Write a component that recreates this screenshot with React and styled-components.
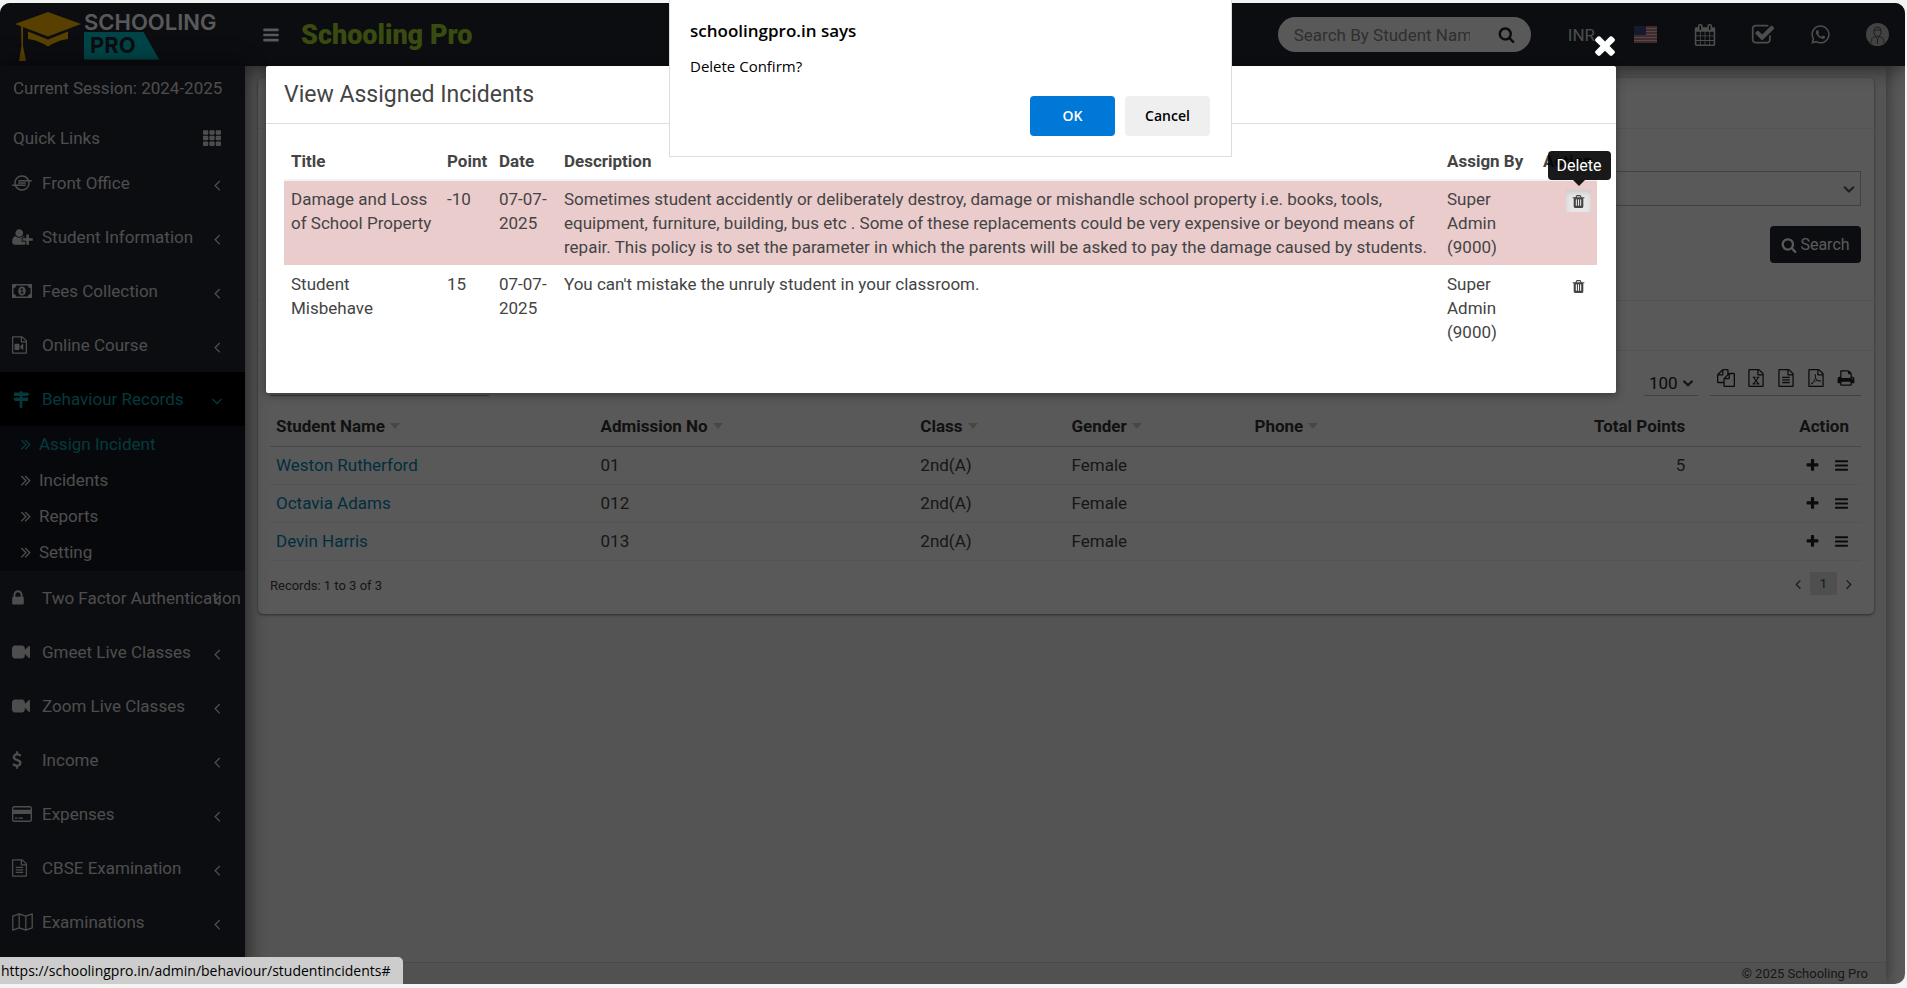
import React from "react";
import styled, { createGlobalStyle } from "styled-components";
import { FaIoxhost, FaTh, FaWhatsapp } from "react-icons/fa";

const FILE =
  "M1596 380q28 28 48 76t20 88v1152q0 40-28 68t-68 28h-1344q-40 0-68-28t-28-68v-1600q0-40 28-68t68-28h896q40 0 88 20t76 48zm-444-244v376h376q-10-29-22-41l-313-313q-12-12-41-22zm384 1528v-1024h-416q-40 0-68-28t-28-68v-416h-768v1536h1280z";

const PATHS = {
  bars: "M1664 1344v128q0 26-19 45t-45 19h-1408q-26 0-45-19t-19-45v-128q0-26 19-45t45-19h1408q26 0 45 19t19 45zm0-512v128q0 26-19 45t-45 19h-1408q-26 0-45-19t-19-45v-128q0-26 19-45t45-19h1408q26 0 45 19t19 45zm0-512v128q0 26-19 45t-45 19h-1408q-26 0-45-19t-19-45v-128q0-26 19-45t45-19h1408q26 0 45 19t19 45z",
  plus: "M1600 736v192q0 40-28 68t-68 28h-416v416q0 40-28 68t-68 28h-192q-40 0-68-28t-28-68v-416h-416q-40 0-68-28t-28-68v-192q0-40 28-68t68-28h416v-416q0-40 28-68t68-28h192q40 0 68 28t28 68v416h416q40 0 68 28t28 68z",
  search:
    "M1216 832q0-185-131.500-316.500t-316.500-131.500-316.500 131.500-131.500 316.500 131.500 316.500 316.500 131.500 316.500-131.500 131.500-316.500zm512 832q0 52-38 90t-90 38q-54 0-90-38l-343-342q-179 124-399 124-143 0-273.500-55.500t-225-150-150-225-55.500-273.500 55.500-273.500 150-225 225-150 273.500-55.500 273.500 55.500 225 150 150 225 55.500 273.500q0 220-124 399l343 343q37 37 37 90z",
  calendar:
    "M192 1664h288v-288h-288v288zm352 0h320v-288h-320v288zm-352-352h288v-320h-288v320zm352 0h320v-320h-320v320zm-352-384h288v-288h-288v288zm736 736h320v-288h-320v288zm-384-736h320v-288h-320v288zm768 736h288v-288h-288v288zm-384-352h320v-320h-320v320zm-352-864v-288q0-13-9.500-22.500t-22.500-9.500h-64q-13 0-22.500 9.500t-9.500 22.500v288q0 13 9.500 22.500t22.500 9.500h64q13 0 22.500-9.500t9.500-22.500zm736 864h288v-320h-288v320zm-384-384h320v-288h-320v288zm384 0h288v-288h-288v288zm32-480v-288q0-13-9.500-22.500t-22.500-9.500h-64q-13 0-22.500 9.500t-9.500 22.500v288q0 13 9.500 22.500t22.500 9.500h64q13 0 22.500-9.500t9.500-22.500zm384-64v1280q0 52-38 90t-90 38h-1408q-52 0-90-38t-38-90v-1280q0-52 38-90t90-38h128v-96q0-66 47-113t113-47h64q66 0 113 47t47 113v96h384v-96q0-66 47-113t113-47h64q66 0 113 47t47 113v96h128q52 0 90 38t38 90z",
  check:
    "M1472 930v318q0 119-84.500 203.500t-203.500 84.500h-832q-119 0-203.500-84.500t-84.500-203.500v-832q0-119 84.500-203.500t203.500-84.500h832q63 0 117 25 15 7 18 23 3 17-9 29l-49 49q-10 10-23 10-3 0-9-2-23-6-45-6h-832q-66 0-113 47t-47 113v832q0 66 47 113t113 47h832q66 0 113-47t47-113v-254q0-13 9-22l64-64q10-10 23-10 6 0 12 3 20 8 20 29zm231-489l-814 814q-24 24-57 24t-57-24l-430-430q-24-24-24-57t24-57l110-110q24-24 57-24t57 24l263 263 647-647q24-24 57-24t57 24l110 110q24 24 24 57t-24 57z",
  times:
    "M1490 1322q0 40-28 68l-136 136q-28 28-68 28t-68-28l-294-294-294 294q-28 28-68 28t-68-28l-136-136q-28-28-28-68t28-68l294-294-294-294q-28-28-28-68t28-68l136-136q28-28 68-28t68 28l294 294 294-294q28-28 68-28t68 28l136 136q28 28 28 68t-28 68l-294 294 294 294q28 28 28 68z",
  userPlus:
    "M704 896q-159 0-271.500-112.500t-112.500-271.500 112.500-271.500 271.500-112.500 271.500 112.500 112.500 271.500-112.500 271.500-271.500 112.500zm960 128h352q13 0 22.500 9.500t9.500 22.500v192q0 13-9.500 22.500t-22.500 9.500h-352v352q0 13-9.500 22.500t-22.500 9.500h-192q-13 0-22.500-9.500t-9.500-22.500v-352h-352q-13 0-22.500-9.500t-9.500-22.500v-192q0-13 9.500-22.500t22.500-9.500h352v-352q0-13 9.500-22.500t22.500-9.500h192q13 0 22.500 9.500t9.500 22.500v352zm-736 224q0 52 38 90t90 38h256v238q-68 50-171 50h-874q-121 0-194-69t-73-190q0-53 3.500-103.500t14-109 26.500-108.500 43-97.500 62-81 85.500-53.500 111.500-20q19 0 39 17 79 61 154.500 91.500t164.500 30.500 164.500-30.500 154.500-91.500q20-17 39-17 132 0 217 96h-223q-52 0-90 38t-38 90v192z",
  lock: "M640 768h512v-192q0-106-75-181t-181-75-181 75-75 181v192zm832 96v576q0 40-28 68t-68 28h-960q-40 0-68-28t-28-68v-576q0-40 28-68t68-28h32v-192q0-184 132-316t316-132 316 132 132 316v192h32q40 0 68 28t28 68z",
  copy: "M1696 384q40 0 68 28t28 68v1216q0 40-28 68t-68 28h-960q-40 0-68-28t-28-68v-288h-544q-40 0-68-28t-28-68v-672q0-40 20-88t48-76l408-408q28-28 76-48t88-20h416q40 0 68 28t28 68v328q68-40 128-40h416zm-544 213l-299 299h299v-299zm-640-384l-299 299h299v-299zm196 647l316-316v-416h-384v416q0 40-28 68t-68 28h-416v640h512v-256q0-40 20-88t48-76zm956 804v-1152h-384v416q0 40-28 68t-68 28h-416v640h896z",
  fileText:
    FILE +
    "m-1024-864q0-14 9-23t23-9h704q14 0 23 9t9 23v64q0 14-9 23t-23 9h-704q-14 0-23-9t-9-23v-64zm736 224q14 0 23 9t9 23v64q0 14-9 23t-23 9h-704q-14 0-23-9t-9-23v-64q0-14 9-23t23-9h704zm0 256q14 0 23 9t9 23v64q0 14-9 23t-23 9h-704q-14 0-23-9t-9-23v-64q0-14 9-23t23-9h704z",
  fileExcel:
    FILE +
    "m-979-234v106h281v-106h-75l103-161q5-7 10-16.500t7.500-13.500 3.500-4h2q1 4 5 10 2 4 4.500 7.500t6 8 6.500 8.500l107 161h-76v106h291v-106h-68l-192-273 195-282h67v-107h-279v107h74l-103 159q-4 7-10 16.500t-9 13.500l-2 3h-2q-1-4-5-10-6-11-17-23l-106-159h76v-107h-290v107h68l189 272-194 283h-68z",
  filePdf:
    FILE +
    "m-514-593q33 26 84 56 59-7 117-7 147 0 177 49 16 22 2 52 0 1-1 2l-2 2v1q-6 38-71 38-48 0-115-20t-130-53q-221 24-392 83-153 262-242 262-15 0-28-7l-24-12q-1-1-6-5-10-10-6-36 9-40 56-91.500t132-96.500q14-9 23 6 2 2 2 4 52-85 107-197 68-136 104-262-24-82-30.500-159.500t6.500-127.500q11-40 42-40h22q23 0 35 15 18 21 9 68-2 6-4 8 1 3 1 8v30q-2 123-14 192 55 164 146 238zm-576 411q52-24 137-158-51 40-87.500 84t-49.500 74zm398-920q-15 42-2 132 1-7 7-44 0-3 7-43 1-4 4-8-1-1-1-2-1-2-1-3-1-22-13-36 0 1-1 2v2zm-124 661q135-54 284-81-2-1-13-9.500t-16-13.500q-76-67-127-176-27 86-83 197-30 56-45 83zm646-16q-24-24-140-24 76 28 124 28 14 0 18-1 0-1-2-3z",
  fileVideo:
    FILE +
    "M768 768q52 0 90 38t38 90v384q0 52-38 90t-90 38h-256q-52 0-90-38t-38-90v-384q0-52 38-90t90-38zm492 2q20 8 20 30v576q0 22-20 30-8 2-12 2-14 0-23-9l-265-266v-90l265-266q9-9 23-9 4 0 12 2z",
  print:
    "M448 1536h896v-256h-896v256zm0-640h896v-384h-160q-40 0-68-28t-28-68v-160h-640v640zm1152 64q0-26-19-45t-45-19-45 19-19 45 19 45 45 19 45-19 19-45zm128 0v416q0 13-9.500 22.500t-22.500 9.500h-224v160q0 40-28 68t-68 28h-960q-40 0-68-28t-28-68v-160h-224q-13 0-22.500-9.500t-9.500-22.500v-416q0-79 56.500-135.500t135.500-56.500h64v-544q0-40 28-68t68-28h672q40 0 88 20t76 48l152 152q28 28 48 76t20 88v256h64q79 0 135.500 56.500t56.500 135.500z",
  video:
    "M1792 352v1088q0 42-39 59-13 5-25 5-27 0-45-19l-403-403v166q0 119-84.500 203.500t-203.500 84.500h-704q-119 0-203.500-84.500t-84.500-203.500v-704q0-119 84.500-203.500t203.500-84.500h704q119 0 203.500 84.500t84.500 203.500v165l403-402q18-19 45-19 12 0 25 5 39 17 39 59z",
  dollar:
    "M1362 1185q0 153-99.500 263.500t-258.500 136.500v175q0 14-9 23t-23 9h-135q-13 0-22.500-9.500t-9.500-22.500v-175q-66-9-127.500-31t-101.500-44.500-74-48-46.500-37.500-17.500-18q-17-21-2-41l103-135q7-10 23-12 15-2 24 9l2 2q113 99 243 125 37 8 74 8 81 0 142.500-43t61.500-122q0-28-15-53t-33.500-42-58.500-37.500-66-32-80-32.500q-39-16-61.500-25t-61.500-26.500-62.500-31-56.500-35.500-53.500-42.500-43.500-49-35.500-58-21-66.500-8.500-78q0-138 98-242t255-134v-180q0-13 9.500-22.500t22.500-9.500h135q14 0 23 9t9 23v176q57 6 110.500 23t87 33.500 63.500 37.500 39 29 15 14q17 18 5 38l-81 146q-8 15-23 16-14 3-27-7-3-3-14.500-12t-39-26.500-58.500-32-74.500-26-85.500-11.500q-95 0-155 43t-60 111q0 26 8.500 48t29.500 41.500 39.500 33 56 31 60.500 27 70 27.500q53 20 81 31.500t76 35 75.500 42.500 62 50 53 63.500 31.500 76.500 13 94z",
  signs:
    "M768 128h256v128h512l224 160-224 192h-512v128h576v352h-576v704h-256v-704h-448l-224-176 224-176h448v-128h-576v-352h576z",
  trash:
    "M704 1376v-704q0-14-9-23t-23-9h-64q-14 0-23 9t-9 23v704q0 14 9 23t23 9h64q14 0 23-9t9-23zm256 0v-704q0-14-9-23t-23-9h-64q-14 0-23 9t-9 23v704q0 14 9 23t23 9h64q14 0 23-9t9-23zm256 0v-704q0-14-9-23t-23-9h-64q-14 0-23 9t-9 23v704q0 14 9 23t23 9h64q14 0 23-9t9-23zm-544-992h448l-48-117q-7-9-17-11h-317q-10 2-17 11zm928 32v64q0 14-9 23t-23 9h-96v948q0 83-47 143.500t-113 60.500h-832q-66 0-113-58.500t-47-141.500v-952h-96q-14 0-23-9t-9-23v-64q0-14 9-23t23-9h309l70-167q15-37 54-63t79-26h320q40 0 79 26t54 63l70 167h309q14 0 23 9t9 23z",
  left: "M1203 544q0 13-10 23l-393 393 393 393q10 10 10 23t-10 23l-50 50q-10 10-23 10t-23-10l-466-466q-10-10-10-23t10-23l466-466q10-10 23-10t23 10l50 50q10 10 10 23z",
  right:
    "M1171 960q0 13-10 23l-466 466q-10 10-23 10t-23-10l-50-50q-10-10-10-23t10-23l393-393-393-393q-10-10-10-23t10-23l50-50q10-10 23-10t23 10l466 466q10 10 10 23z",
  down: "M1395 736q0 13-10 23l-466 466q-10 10-23 10t-23-10l-466-466q-10-10-10-23t10-23l50-50q10-10 23-10t23 10l393 393 393-393q10-10 23-10t23 10l50 50q10 10 10 23z",
  doubleRight:
    "M979 960q0 13-10 23l-466 466q-10 10-23 10t-23-10l-50-50q-10-10-10-23t10-23l393-393-393-393q-10-10-10-23t10-23l50-50q10-10 23-10t23 10l466 466q10 10 10 23zm384 0q0 13-10 23l-466 466q-10 10-23 10t-23-10l-50-50q-10-10-10-23t10-23l393-393-393-393q-10-10-10-23t10-23l50-50q10-10 23-10t23 10l466 466q10 10 10 23z",
};

function Icon({ name, size = 18, box = "0 0 1792 1792" }) {
  const [, , w, h] = box.split(" ");
  return (
    <svg
      width={Math.round((size * w) / h)}
      height={size}
      viewBox={box}
      fill="currentColor"
      aria-hidden="true"
    >
      <path d={PATHS[name]} />
    </svg>
  );
}

function MoneyIcon() {
  return (
    <svg width="20" height="14" viewBox="0 0 20 14" fill="currentColor" aria-hidden="true">
      <path fillRule="evenodd" d="M0 0h20v14H0zM4 1.500A2.500 2.500 0 0 1 1.500 4v6A2.500 2.500 0 0 1 4 12.500h12a2.500 2.500 0 0 1 2.500-2.500V4A2.500 2.500 0 0 1 16 1.500z" />
      <path fillRule="evenodd" d="M10 2.500c2.200 0 3.800 2 3.800 4.500s-1.600 4.500-3.800 4.500S6.200 9.500 6.200 7 7.800 2.500 10 2.500zM9.600 4.200L8.200 5.400l.6.800.7-.5v2.900H8.400v1h3.300v-1h-1.100V4.200z" />
    </svg>
  );
}

function CardIcon() {
  return (
    <svg width="20" height="16" viewBox="0 0 20 16" fill="currentColor" aria-hidden="true">
      <rect x="0.700" y="0.700" width="18.600" height="14.600" rx="1.500" fill="none" stroke="currentColor" strokeWidth="1.400" />
      <path d="M1 3.800h18V8H1zM3 11.500h2.500v1.300H3zM6.500 11.500H11v1.300H6.500z" />
    </svg>
  );
}

function MapIcon() {
  return (
    <svg width="21" height="18" viewBox="0 0 21 18" fill="none" stroke="currentColor" strokeWidth="1.300" strokeLinejoin="round" aria-hidden="true">
      <path d="M.8 3.200l6.400-2.400 6.600 2.400 6.400-2.400v14l-6.400 2.400-6.600-2.400-6.400 2.400zM7.200.8v14M13.800 3.200v14" />
    </svg>
  );
}

function CapLogo() {
  return (
    <svg width="68" height="52" viewBox="0 0 68 52" aria-hidden="true">
      <g fill="#ffb700">
        <path d="M34 1L67 13 34 25.500 1 13z" />
        <path d="M14 20.500l20 8 20-8v7.500c-4 1-7 1-10 2.500-4 1.500-7 3-10 5-3-2-6-3.500-10-5-3-1.500-6-1.500-10-2.500z" />
        <path d="M7 14h2v21l3 15H5l2.500-15z" />
      </g>
    </svg>
  );
}

function Flag() {
  return (
    <svg width="23" height="17" viewBox="0 0 23 17" aria-hidden="true">
      <rect width="23" height="17" fill="#ddd" />
      <path d="M0 1h23M0 4h23M0 7h23M0 10h23M0 13h23M0 16h23" stroke="#c0505c" strokeWidth="1.400" />
      <rect width="12" height="9" fill="#3c4a80" />
    </svg>
  );
}

function Avatar() {
  return (
    <svg width="23" height="23" viewBox="0 0 23 23" aria-hidden="true">
      <circle cx="11.500" cy="11.500" r="11.500" fill="#bdbdbd" />
      <path
        d="M8 7.500a3.500 3.500 0 0 1 7 0v2c0 2-1.500 4-3.500 4S8 11.500 8 9.500zM8 7.500c3 0 4-1 4-1.500.5 1 2 1.500 3 1.500M5 20c0-4 1-5.500 4.500-6.500l2 2.500 2-2.500C17 14.500 18 16 18 20M11.500 16v5"
        fill="none"
        stroke="#555"
        strokeWidth="1"
      />
    </svg>
  );
}

const menuTop = [
  { label: "Front Office", icon: <FaIoxhost size={20} /> },
  { label: "Student Information", icon: <Icon name="userPlus" box="0 0 2048 1792" /> },
  { label: "Fees Collection", icon: <MoneyIcon /> },
  { label: "Online Course", icon: <Icon name="fileVideo" box="128 0 1536 1792" /> },
  { label: "Behaviour Records", icon: <Icon name="signs" />, active: true },
];

const subMenu = ["Assign Incident", "Incidents", "Reports", "Setting"];

const menuBottom = [
  { label: "Two Factor Authentication", icon: <Icon name="lock" box="320 0 1152 1792" /> },
  { label: "Gmeet Live Classes", icon: <Icon name="video" /> },
  { label: "Zoom Live Classes", icon: <Icon name="video" /> },
  { label: "Income", icon: <Icon name="dollar" box="384 0 1024 1792" /> },
  { label: "Expenses", icon: <CardIcon /> },
  { label: "CBSE Examination", icon: <Icon name="fileText" box="128 0 1536 1792" /> },
  { label: "Examinations", icon: <MapIcon /> },
];

const students = [
  { name: "Weston Rutherford", no: "01", points: "5" },
  { name: "Octavia Adams", no: "012", points: "" },
  { name: "Devin Harris", no: "013", points: "" },
];

const incidents = [
  {
    title: "Damage and Loss of School Property",
    point: "-10",
    text: "Sometimes student accidently or deliberately destroy, damage or mishandle school property i.e. books, tools, equipment, furniture, building, bus etc . Some of these replacements could be very expensive or beyond means of repair. This policy is to set the parameter in which the parents will be asked to pay the damage caused by students.",
    negative: true,
  },
  {
    title: "Student Misbehave",
    point: "15",
    text: "You can't mistake the unruly student in your classroom.",
  },
];

function MenuItem({ label, icon, active }) {
  return (
    <MenuLink href="#" $active={active}>
      <MenuIcon>{icon}</MenuIcon>
      {label}
      <Chevron>
        <Icon name={active ? "down" : "left"} size={18} />
      </Chevron>
    </MenuLink>
  );
}

function Header() {
  return (
    <TopBar>
      <Logo href="#">
        <CapLogo />
        <LogoText>
          <span>SCHOOLING</span>
          <LogoBadge>PRO</LogoBadge>
        </LogoText>
      </Logo>
      <BarButton aria-label="Toggle menu">
        <Icon name="bars" size={18} />
      </BarButton>
      <Brand>Schooling Pro</Brand>
      <Tools>
        <SearchPill>
          <input aria-label="Search student" placeholder="Search By Student Name, Roll Number" />
          <button aria-label="Search">
            <Icon name="search" size={17} />
          </button>
        </SearchPill>
        <ToolLink href="#" $wide>INR</ToolLink>
        <ToolLink href="#" $wide aria-label="Language"><Flag /></ToolLink>
        <ToolLink href="#" aria-label="Calendar"><Icon name="calendar" size={22} /></ToolLink>
        <ToolLink href="#" aria-label="Tasks"><Icon name="check" size={24} /></ToolLink>
        <ToolLink href="#" aria-label="Chat"><FaWhatsapp size={21} /></ToolLink>
        <ToolLink href="#" aria-label="Profile"><Avatar /></ToolLink>
      </Tools>
    </TopBar>
  );
}

function SideMenu() {
  return (
    <Sidebar>
      <Session>Current Session: 2024-2025</Session>
      <QuickLinks>
        Quick Links
        <FaTh size={18} />
      </QuickLinks>
      {menuTop.map((item) => (
        <MenuItem key={item.label} {...item} />
      ))}
      <SubMenu>
        {subMenu.map((label, i) => (
          <SubLink href="#" key={label} $active={i === 0}>
            <Icon name="doubleRight" size={18} box="400 0 1000 1792" />
            {label}
          </SubLink>
        ))}
      </SubMenu>
      {menuBottom.map((item) => (
        <MenuItem key={item.label} {...item} />
      ))}
    </Sidebar>
  );
}

function StudentList() {
  return (
    <Card>
      <CardHead />
      <Filters>
        <SelectBox>
          <select aria-label="Section" />
          <Icon name="down" size={18} />
        </SelectBox>
        <SearchButton>
          <Icon name="search" size={16} />
          Search
        </SearchButton>
      </Filters>
      <ListHead />
      <TableTools>
        <TableSearch aria-label="Search in table" />
        <LengthSelect>
          <select aria-label="Rows per page">
            <option>100</option>
          </select>
          <Icon name="down" size={16} />
        </LengthSelect>
        <Exports>
          {["copy", "fileExcel", "fileText", "filePdf", "print"].map((name) => (
            <button key={name} aria-label={name}>
              <Icon name={name} size={18} />
            </button>
          ))}
        </Exports>
      </TableTools>
      <Students>
        <colgroup>
          <col width="20.4%" />
          <col width="20.1%" />
          <col width="9.500%" />
          <col width="11.500%" />
          <col width="15.500%" />
          <col width="12.400%" />
          <col />
        </colgroup>
        <thead>
          <tr>
            {["Student Name", "Admission No", "Class", "Gender", "Phone"].map((h) => (
              <th key={h}>
                <Sortable>{h}</Sortable>
              </th>
            ))}
            <Right as="th">Total Points</Right>
            <ActionCell as="th">Action</ActionCell>
          </tr>
        </thead>
        <tbody>
          {students.map((s) => (
            <tr key={s.no}>
              <td><a href="#">{s.name}</a></td>
              <td>{s.no}</td>
              <td>2nd(A)</td>
              <td>Female</td>
              <td />
              <Right>{s.points}</Right>
              <ActionCell>
                <RowActions>
                  <button aria-label="Assign"><Icon name="plus" size={15} /></button>
                  <button aria-label="View"><Icon name="bars" size={15} /></button>
                </RowActions>
              </ActionCell>
            </tr>
          ))}
        </tbody>
      </Students>
      <CardFoot>
        Records: 1 to 3 of 3
        <Pager>
          <button aria-label="Previous"><Icon name="left" size={16} /></button>
          <PageNumber>1</PageNumber>
          <button aria-label="Next"><Icon name="right" size={16} /></button>
        </Pager>
      </CardFoot>
    </Card>
  );
}

function IncidentsModal() {
  return (
    <Modal role="dialog" aria-label="View Assigned Incidents">
      <CloseButton aria-label="Close">
        <Icon name="times" size={30} />
      </CloseButton>
      <ModalHead>
        <h4>View Assigned Incidents</h4>
      </ModalHead>
      <Incidents>
        <colgroup>
          <col width="156" />
          <col width="52" />
          <col width="65" />
          <col />
          <col width="96" />
          <col width="61" />
        </colgroup>
        <thead>
          <tr>
            <th>Title</th>
            <th>Point</th>
            <th>Date</th>
            <th>Description</th>
            <th>Assign By</th>
            <Right as="th">Action</Right>
          </tr>
        </thead>
        <tbody>
          {incidents.map((row) => (
            <IncidentRow key={row.title} $negative={row.negative}>
              <td>{row.title}</td>
              <td>{row.point}</td>
              <td>07-07-2025</td>
              <td>{row.text}</td>
              <td>Super Admin (9000)</td>
              <Right>
                <TrashButton aria-label="Delete" $hover={row.negative}>
                  <Icon name="trash" size={15} />
                  {row.negative && <Tooltip>Delete</Tooltip>}
                </TrashButton>
              </Right>
            </IncidentRow>
          ))}
        </tbody>
      </Incidents>
    </Modal>
  );
}

function App() {
  return (
    <>
      <GlobalStyle />
      <Screen>
        <Page>
          <Header />
          <Body>
            <SideMenu />
            <Main>
              <Content>
                <StudentList />
              </Content>
              <Footer>© 2025 Schooling Pro</Footer>
            </Main>
          </Body>
          <Backdrop>
            <IncidentsModal />
          </Backdrop>
        </Page>
        <Confirm role="alertdialog" aria-label="schoolingpro.in says">
          <h2>schoolingpro.in says</h2>
          <p>Delete Confirm?</p>
          <ConfirmButtons>
            <ConfirmButton $primary>OK</ConfirmButton>
            <ConfirmButton>Cancel</ConfirmButton>
          </ConfirmButtons>
        </Confirm>
        <StatusBar>https://schoolingpro.in/admin/behaviour/studentincidents#</StatusBar>
      </Screen>
    </>
  );
}

export default App;

const GlobalStyle = createGlobalStyle`
  * {
    box-sizing: border-box;
  }
  body {
    margin: 0;
    background: #f3f3f3;
    color: #444;
    font: 17px/24px Roboto, "Liberation Sans", sans-serif;
  }
  svg {
    display: block;
    flex: none;
  }
  a {
    text-decoration: none;
  }
  button {
    display: flex;
    align-items: center;
    justify-content: center;
    border: 0;
    padding: 0;
    background: none;
    color: inherit;
    font: inherit;
    cursor: pointer;
  }
`;

const Screen = styled.div`
  position: relative;
  height: 100vh;
  padding: 3px 2px 4px 0;
  overflow: hidden;
`;

const Page = styled.div`
  position: relative;
  display: flex;
  flex-direction: column;
  height: 100%;
  overflow: hidden;
  border-radius: 10px;
  background: #fff;
`;

const TopBar = styled.header`
  display: flex;
  align-items: center;
  flex: none;
  height: 63px;
  padding-right: 16px;
  background: #222530;
  box-shadow: 0 2px 20px rgba(0, 0, 0, 0.6);
  z-index: 1;
  color: #fff;
`;

const Logo = styled.a`
  display: flex;
  align-items: center;
  gap: 2px;
  width: 245px;
  padding: 4px 0 0 14px;
  color: #fff;
`;

const LogoText = styled.span`
  display: flex;
  flex-direction: column;
  align-items: flex-start;
  height: 50px;
  font: 600 22px/20px Inter, sans-serif;
`;

const LogoBadge = styled.span`
  width: 75px;
  height: 28px;
  padding-left: 6px;
  background: #00c4cc;
  clip-path: polygon(0 0, 79% 0, 100% 100%, 0 100%);
  color: #222530;
  font: 700 22px/27px Inter, sans-serif;
`;

const BarButton = styled.button`
  width: 52px;
  height: 40px;
`;

const Brand = styled.h1`
  margin: 0 0 0 4px;
  color: #a5d62c;
  font-size: 27px;
  font-weight: 900;
  line-height: 32px;
`;

const Tools = styled.div`
  display: flex;
  align-items: center;
  margin-left: auto;
  gap: 35px;
`;

const SearchPill = styled.div`
  display: flex;
  align-items: center;
  width: 253px;
  height: 35px;
  padding: 0 16px;
  border-radius: 18px;
  background: #fff;
  color: #222;

  input {
    width: 176px;
    border: 0;
    padding: 0;
    background: none;
    font: inherit;
    outline: 0;
  }
  input::placeholder {
    color: #888;
  }
  button {
    margin-left: auto;
  }
`;

const ToolLink = styled.a`
  padding: ${(props) => (props.$wide ? "0 2px" : "0")};
  color: #ddd;
`;

const Body = styled.div`
  display: flex;
  flex: 1;
  min-height: 0;
`;

const Sidebar = styled.nav`
  flex: none;
  width: 245px;
  background: #222530;
  box-shadow: 0 0 20px rgba(0, 0, 0, 0.7);
  color: #ddd;
  z-index: 1;
`;

const Session = styled.div`
  height: 44px;
  padding: 10px 13px;
`;

const QuickLinks = styled.div`
  display: flex;
  align-items: center;
  justify-content: space-between;
  height: 46px;
  padding: 10px 24px 0 13px;
`;

const MenuLink = styled.a`
  position: relative;
  display: flex;
  align-items: center;
  height: 54px;
  padding-left: 12px;
  background: ${(props) => (props.$active ? "#000" : "none")};
  color: ${(props) => (props.$active ? "#0fa3ab" : "#ddd")};
  white-space: nowrap;
`;

const MenuIcon = styled.span`
  width: 30px;
`;

const Chevron = styled.span`
  position: absolute;
  right: 19px;
  top: 20px;
`;

const SubMenu = styled.div`
  padding-bottom: 1px;
  background: #151820;
`;

const SubLink = styled.a`
  display: flex;
  align-items: center;
  gap: 8px;
  height: 36px;
  padding-left: 21px;
  color: ${(props) => (props.$active ? "#0fa3ab" : "#ddd")};
`;

const Main = styled.main`
  display: flex;
  flex: 1;
  flex-direction: column;
  margin-right: 19px;
  background: #f0f0f0;
  box-shadow: 0 0 16px rgba(0, 0, 0, 0.5);
`;

const Content = styled.div`
  flex: 1;
  padding: 12px 12px 0 13px;
`;

const Footer = styled.footer`
  height: 22px;
  padding-right: 18px;
  border-top: 1px solid #d2d2d2;
  background: #e9e9e9;
  font-size: 13px;
  line-height: 21px;
  text-align: right;
`;

const Card = styled.section`
  border-radius: 5px;
  background: #fff;
  box-shadow: 0 1px 3px rgba(0, 0, 0, 0.5);
`;

const CardHead = styled.div`
  height: 51px;
  border-bottom: 1px solid #eee;
`;

const Filters = styled.div`
  display: flex;
  flex-direction: column;
  align-items: flex-end;
  height: 172px;
  padding: 42px 13px 0;
  gap: 20px;
  border-bottom: 1px solid #eee;
`;

const SelectBox = styled.label`
  display: flex;
  align-items: center;
  width: 50%;
  height: 35px;
  padding-right: 2px;
  border: 1px solid #bbb;

  select {
    flex: 1;
    height: 100%;
    border: 0;
    background: none;
    appearance: none;
  }
  path {
    stroke: currentColor;
    stroke-width: 80;
  }
`;

const SearchButton = styled.button`
  width: 91px;
  height: 37px;
  gap: 3px;
  border-radius: 4px;
  background: #222530;
  color: #fff;
  font-size: 16px;
`;

const ListHead = styled.div`
  height: 50px;
  border-bottom: 1px solid #eee;
`;

const TableTools = styled.div`
  display: flex;
  align-items: flex-end;
  height: 45px;
  padding: 0 13px 0 12px;
`;

const TableSearch = styled.input`
  width: 219px;
  height: 30px;
  border: 0;
  border-bottom: 1px solid #aaa;
`;

const LengthSelect = styled.label`
  display: flex;
  align-items: center;
  width: 54px;
  height: 26px;
  margin: 0 12px 0 auto;
  border-bottom: 1px solid #bbb;

  select {
    width: 36px;
    border: 0;
    padding: 0 0 0 5px;
    background: none;
    color: #222;
    font: inherit;
    appearance: none;
  }
  path {
    stroke: currentColor;
    stroke-width: 120;
  }
`;

const Exports = styled.div`
  display: flex;
  justify-content: space-between;
  width: 151px;
  height: 30px;
  padding: 0 6px 6px 7px;
  border-bottom: 1px solid #bbb;
  color: #222;
`;

const Students = styled.table`
  width: calc(100% - 25px);
  margin: 11px 13px 0 12px;
  border-collapse: collapse;
  table-layout: fixed;

  th,
  td {
    height: 38px;
    padding: 0 7px 0 6px;
    border-bottom: 1px solid #eee;
    text-align: left;
  }
  th {
    height: 39px;
    border-color: #ccc;
    color: #333;
  }
  a {
    color: #0084b4;
  }
`;

const Right = styled.td`
  && {
    text-align: right;
  }
`;

const ActionCell = styled(Right)`
  && {
    padding-right: 12px;
  }
`;

const Sortable = styled.span`
  display: flex;
  align-items: center;
  gap: 5px;

  &::after {
    content: "";
    border: 5px solid transparent;
    border-top: 6px solid #ccc;
    border-bottom: 0;
  }
`;

const RowActions = styled.span`
  display: flex;
  justify-content: flex-end;
  gap: 14px;
  color: #222;
`;

const CardFoot = styled.div`
  display: flex;
  align-items: center;
  justify-content: space-between;
  height: 53px;
  padding: 0 17px 3px 12px;
  font-size: 13px;
`;

const Pager = styled.div`
  display: flex;
  align-items: center;
  gap: 4px;
  margin-bottom: 4px;
`;

const PageNumber = styled.button`
  width: 27px;
  height: 23px;
  background: #e3e3e3;
`;

/* dark layer over the page, the dialog starts under the top bar */
const Backdrop = styled.div`
  position: absolute;
  inset: 0;
  z-index: 2;
  padding: 63px 289px 0 266px;
  background: rgba(0, 0, 0, 0.65);
`;

const Modal = styled.div`
  position: relative;
  height: 327px;
  border-radius: 2px;
  background: #fff;
  box-shadow: 0 2px 10px rgba(0, 0, 0, 0.4);
`;

const CloseButton = styled.button`
  position: absolute;
  top: -36px;
  right: -4px;
  color: #fff;
`;

const ModalHead = styled.div`
  height: 58px;
  padding: 14px 18px;
  border-bottom: 1px solid #ddd;

  h4 {
    margin: 0;
    font-size: 23px;
    font-weight: 400;
    line-height: 30px;
  }
`;

const Incidents = styled.table`
  width: calc(100% - 37px);
  margin: 19px 19px 0 18px;
  border-collapse: collapse;
  table-layout: fixed;

  th,
  td {
    padding: 6px 5px 6px 7px;
    text-align: left;
    vertical-align: top;
  }
  th {
    border-bottom: 2px solid #f3f3f3;
  }
  td {
    border-bottom: 1px solid #fff;
  }
`;

const IncidentRow = styled.tr`
  background: ${(props) => (props.$negative ? "#eacccc" : "none")};
`;

const TrashButton = styled.button`
  position: relative;
  width: 25px;
  height: 22px;
  margin: 3px 1px 0 auto;
  background: ${(props) => (props.$hover ? "#e7e7e7" : "none")};
  box-shadow: ${(props) => (props.$hover ? "inset 0 3px 5px rgba(0, 0, 0, 0.12)" : "none")};
`;

const Tooltip = styled.span`
  position: absolute;
  bottom: 32px;
  left: 50%;
  width: 63px;
  margin-left: -31px;
  border-radius: 4px;
  background: rgba(0, 0, 0, 0.9);
  color: #fff;
  font-size: 16px;
  line-height: 29px;
  text-align: center;

  &::after {
    content: "";
    position: absolute;
    top: 100%;
    left: 50%;
    margin-left: -6px;
    border: 6px solid transparent;
    border-top-color: rgba(0, 0, 0, 0.9);
    border-bottom: 0;
  }
`;

const Confirm = styled.div`
  position: absolute;
  top: 0;
  left: 669px;
  z-index: 3;
  width: 563px;
  height: 157px;
  padding: 19px 21px 19px 20px;
  border: 1px solid #ddd;
  border-top: 0;
  background: #fff;
  color: #000;
  font: 15px/24px "Open Sans", sans-serif;

  h2 {
    margin: 0 0 11px;
    font-size: 17px;
    font-weight: 600;
    line-height: 24px;
  }
  p {
    margin: 0 0 18px;
  }
`;

const ConfirmButtons = styled.div`
  display: flex;
  justify-content: flex-end;
  gap: 10px;
`;

const ConfirmButton = styled.button`
  width: 85px;
  height: 40px;
  border-radius: 4px;
  background: ${(props) => (props.$primary ? "#0078d7" : "#efefef")};
  color: ${(props) => (props.$primary ? "#fff" : "#000")};
  font-size: 14px;
  font-weight: 600;
`;

const StatusBar = styled.div`
  position: absolute;
  left: 0;
  bottom: 4px;
  z-index: 3;
  width: 403px;
  height: 27px;
  padding-left: 1px;
  border-radius: 0 5px 0 0;
  background: #cdcdcd;
  color: #000;
  font: 14px/27px "Open Sans", sans-serif;
  white-space: nowrap;
`;
